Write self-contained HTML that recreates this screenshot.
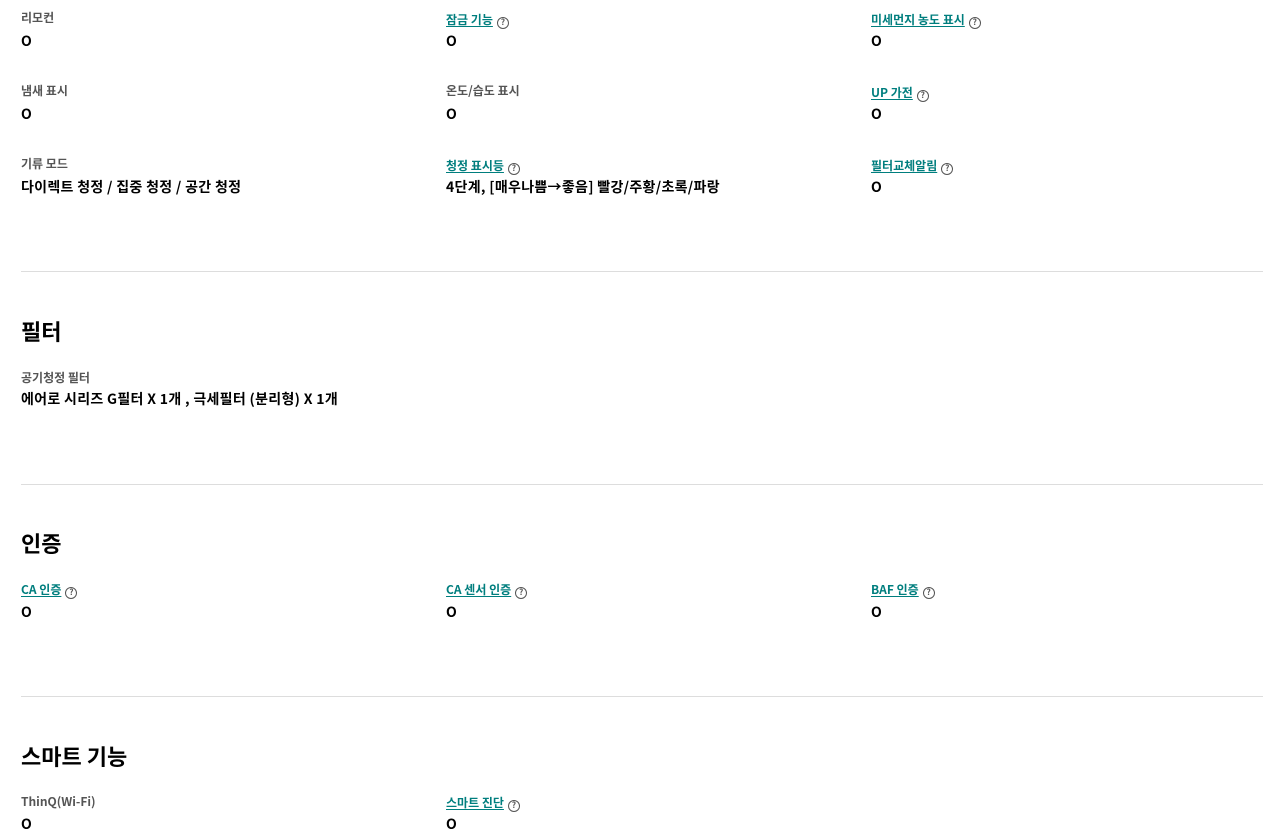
<!DOCTYPE html>
<html><head><meta charset="utf-8"><style>
body{margin:0;width:1284px;height:833px;background:#fff;position:relative;overflow:hidden;font-family:"Noto Sans CJK KR","Liberation Sans",sans-serif}
.l,.v,.h{position:absolute;white-space:nowrap}
.l{font-size:12px;line-height:16px;color:#555;font-weight:700}
.l a{color:#007e7e;text-decoration:underline;text-underline-offset:2px}
.q{display:inline-block;box-sizing:border-box;width:12px;height:12px;border:1px solid #555;border-radius:50%;font-size:8px;line-height:10px;text-align:center;color:#555;margin-left:4px;vertical-align:-1px;font-weight:700}
.v{font-size:14px;line-height:18px;color:#000;font-weight:700;letter-spacing:0.3px}
.h{font-size:22px;line-height:28px;color:#000;font-weight:700}
.d{position:absolute;left:21px;width:1242px;height:1px;background:#ddd}
</style></head><body>
<div class="l" style="left:21px;top:10px">리모컨</div><div class="v" style="left:21px;top:32px">O</div>
<div class="l" style="left:446px;top:12px"><a>잠금 기능</a><span class="q">?</span></div><div class="v" style="left:446px;top:32px">O</div>
<div class="l" style="left:871px;top:12px"><a>미세먼지 농도 표시</a><span class="q">?</span></div><div class="v" style="left:871px;top:32px">O</div>

<div class="l" style="left:21px;top:83px">냄새 표시</div><div class="v" style="left:21px;top:105px">O</div>
<div class="l" style="left:446px;top:83px">온도/습도 표시</div><div class="v" style="left:446px;top:105px">O</div>
<div class="l" style="left:871px;top:85px"><a>UP 가전</a><span class="q">?</span></div><div class="v" style="left:871px;top:105px">O</div>

<div class="l" style="left:21px;top:156px">기류 모드</div><div class="v" style="left:21px;top:178px">다이렉트 청정 / 집중 청정 / 공간 청정</div>
<div class="l" style="left:446px;top:158px"><a>청정 표시등</a><span class="q">?</span></div><div class="v" style="left:446px;top:178px">4단계, [매우나쁨→좋음] 빨강/주황/초록/파랑</div>
<div class="l" style="left:871px;top:158px"><a>필터교체알림</a><span class="q">?</span></div><div class="v" style="left:871px;top:178px">O</div>

<div class="d" style="top:271px"></div>
<div class="h" style="left:21px;top:317px">필터</div>
<div class="l" style="left:21px;top:370px">공기청정 필터</div><div class="v" style="left:21px;top:390px">에어로 시리즈 G필터 X 1개 , 극세필터 (분리형) X 1개</div>

<div class="d" style="top:484px"></div>
<div class="h" style="left:21px;top:529px">인증</div>
<div class="l" style="left:21px;top:582px"><a>CA 인증</a><span class="q">?</span></div><div class="v" style="left:21px;top:603px">O</div>
<div class="l" style="left:446px;top:582px"><a>CA 센서 인증</a><span class="q">?</span></div><div class="v" style="left:446px;top:603px">O</div>
<div class="l" style="left:871px;top:582px"><a>BAF 인증</a><span class="q">?</span></div><div class="v" style="left:871px;top:603px">O</div>

<div class="d" style="top:696px"></div>
<div class="h" style="left:21px;top:742px">스마트 기능</div>
<div class="l" style="left:21px;top:794px">ThinQ(Wi-Fi)</div><div class="v" style="left:21px;top:815px">O</div>
<div class="l" style="left:446px;top:795px"><a>스마트 진단</a><span class="q">?</span></div><div class="v" style="left:446px;top:815px">O</div>
</body></html>
